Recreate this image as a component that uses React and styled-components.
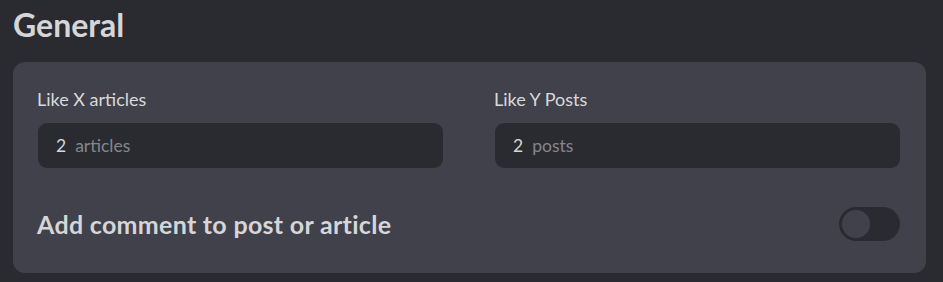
import React, { useState } from "react";
import styled, { createGlobalStyle } from "styled-components";

const GlobalStyle = createGlobalStyle`
  html, body {
    margin: 0;
    background: #2a2b30;
    font-family: "Lato", "Open Sans", sans-serif;
  }
`;

const Page = styled.div`
  padding: 5px 17px 10px 13px;
  height: 282px;
  box-sizing: border-box;
`;

const Title = styled.h1`
  margin: 0 0 17px;
  font-size: 32px;
  font-weight: 700;
  color: #d6d6d8;
  line-height: 40px;
`;

const Card = styled.section`
  background: #40414a;
  border-radius: 12px;
  padding: 26px 26px 32px 24px;
`;

const Row = styled.div`
  display: grid;
  grid-template-columns: 1fr 1fr;
  gap: 51px;
`;

const Field = styled.label`
  display: flex;
  flex-direction: column;
  gap: 13px;
`;

const Label = styled.span`
  font-size: 18px;
  color: #d9d9db;
  line-height: 22px;
`;

const InputBox = styled.div`
  display: flex;
  align-items: center;
  gap: 9px;
  height: 45px;
  margin-left: 1px;
  padding: 0 19px 0 18px;
  background: #2a2b30;
  border-radius: 9px;
  font-size: 17.5px;
`;

const Value = styled.span`
  color: #d6d6d8;
`;

const Unit = styled.span`
  color: #85868c;
`;

const ToggleRow = styled.div`
  display: flex;
  justify-content: space-between;
  align-items: center;
  margin-top: 39px;
`;

const ToggleLabel = styled.span`
  font-size: 25px;
  font-weight: 700;
  letter-spacing: 0.3px;
  line-height: 34px;
  color: #d6d6d8;
`;

const Switch = styled.button`
  width: 61px;
  height: 34px;
  border: none;
  border-radius: 17px;
  background: #2a2b30;
  padding: 3px;
  cursor: pointer;
  display: flex;
  justify-content: ${(p) => (p.$on ? "flex-end" : "flex-start")};
`;

const Knob = styled.span`
  width: 28px;
  height: 28px;
  border-radius: 50%;
  background: #40414a;
`;

export default function App() {
  const [on, setOn] = useState(false);
  return (
    <>
      <GlobalStyle />
      <Page>
        <Title>General</Title>
        <Card>
          <Row>
            <Field>
              <Label>Like X articles</Label>
              <InputBox>
                <Value>2</Value>
                <Unit>articles</Unit>
              </InputBox>
            </Field>
            <Field>
              <Label>Like Y Posts</Label>
              <InputBox>
                <Value>2</Value>
                <Unit>posts</Unit>
              </InputBox>
            </Field>
          </Row>
          <ToggleRow>
            <ToggleLabel>Add comment to post or article</ToggleLabel>
            <Switch $on={on} onClick={() => setOn(!on)}>
              <Knob />
            </Switch>
          </ToggleRow>
        </Card>
      </Page>
    </>
  );
}
